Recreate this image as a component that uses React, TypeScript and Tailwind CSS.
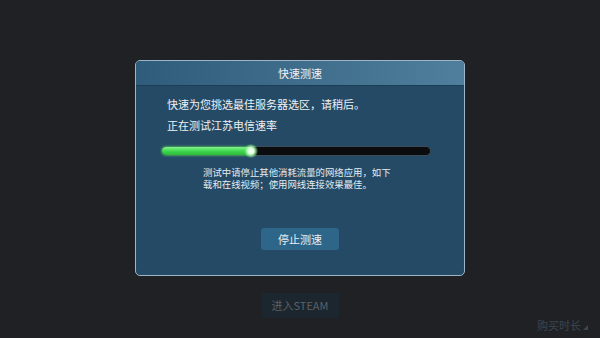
import React from 'react'

const font = { fontFamily: '"Noto Sans CJK SC", "Liberation Sans", sans-serif' }

export default function App() {
  return (
    <div className="flex h-[338px] w-[600px] flex-col items-center overflow-hidden bg-[#1f2125] text-white" style={font}>
      <div className="mt-[60px] flex h-[216px] w-[330px] flex-col overflow-hidden rounded-[5px] border border-[#9cb6c8] bg-[#244a66]">
        <div className="flex h-[25px] items-center justify-center border-b border-[#1d3d55] bg-gradient-to-r from-[#2f5c7b] to-[#4f7f9c] text-[11px] text-[#eef3f6]">
          快速测速
        </div>
        <div className="flex flex-1 flex-col px-[25px] pt-[8px]">
          <p className="pl-[6px] text-[11px] leading-[21px] text-[#eef2f5]">快速为您挑选最佳服务器选区，请稍后。</p>
          <p className="pl-[6px] text-[11px] leading-[21px] text-[#eef2f5]">正在测试江苏电信速率</p>
          <div className="relative mt-[10px] h-[10px] w-[270px] rounded-full border border-[#3c4c58] bg-[#0a0c0d]">
            <div className="h-full w-[92px] rounded-full bg-gradient-to-b from-[#7ef48a] via-[#3fd84f] to-[#2bb83a] shadow-[0_0_3px_#5cf06a]" />
            <div className="absolute left-[82px] top-[-3px] h-[14px] w-[14px] rounded-full bg-[radial-gradient(circle,#ffffff_0%,#d8ffd8_30%,rgba(120,240,130,0.4)_60%,rgba(0,0,0,0)_75%)]" />
          </div>
          <p className="ml-[42px] mt-[10px] w-[192px] text-[9.4px] leading-[12px] text-[#e6ecf0]">
            测试中请停止其他消耗流量的网络应用，如下载和在线视频；使用网线连接效果最佳。
          </p>
          <div className="mt-[38px] flex justify-center">
            <button className="h-[22px] w-[78px] rounded-[3px] bg-[#2d6688] text-[11px] text-[#e9f0f4]">停止测速</button>
          </div>
        </div>
      </div>
      <div className="mt-[17px] flex h-[25px] w-[77px] items-center justify-center bg-[#1b262e] text-[11px] text-[#5b6166]">
        进入STEAM
      </div>
      <div className="flex w-full justify-end pr-[12px]">
        <div className="flex items-end gap-[2px] text-[11px] leading-[14px] text-[#3b4651]">
          <span>购买时长</span>
          <span className="mb-[2px] h-0 w-0 border-b-[5px] border-l-[5px] border-b-[#3b4651] border-l-transparent" />
        </div>
      </div>
    </div>
  )
}
